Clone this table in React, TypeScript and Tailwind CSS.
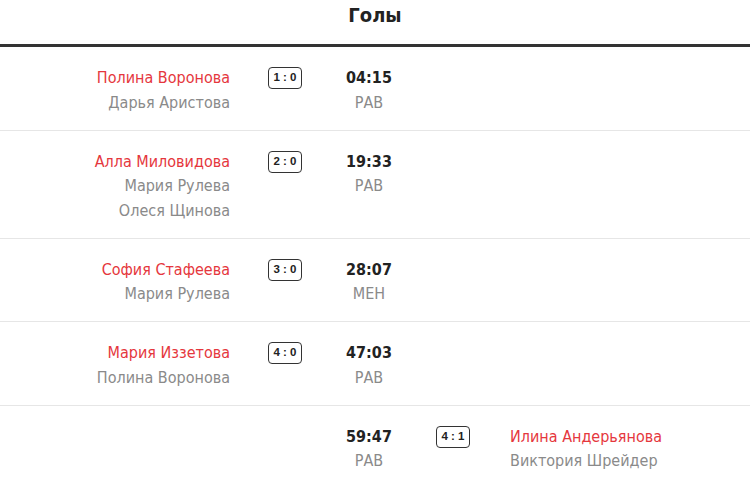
const goals = [
  { side: 'home', scorer: 'Полина Воронова', assists: ['Дарья Аристова'], score: '1 : 0', time: '04:15', kind: 'РАВ' },
  { side: 'home', scorer: 'Алла Миловидова', assists: ['Мария Рулева', 'Олеся Щинова'], score: '2 : 0', time: '19:33', kind: 'РАВ' },
  { side: 'home', scorer: 'София Стафеева', assists: ['Мария Рулева'], score: '3 : 0', time: '28:07', kind: 'МЕН' },
  { side: 'home', scorer: 'Мария Иззетова', assists: ['Полина Воронова'], score: '4 : 0', time: '47:03', kind: 'РАВ' },
  { side: 'away', scorer: 'Илина Андерьянова', assists: ['Виктория Шрейдер'], score: '4 : 1', time: '59:47', kind: 'РАВ' },
]

type Goal = (typeof goals)[number]

function ScoreBox({ score }: { score: string }) {
  return (
    <div className="flex h-[22px] w-[34px] items-center justify-center whitespace-nowrap rounded-[4px] border-[1.5px] border-[#333] text-[11.5px] leading-none font-bold text-[#222] [font-family:'Liberation_Sans',sans-serif]">
      {score}
    </div>
  )
}

function Players({ goal, align }: { goal: Goal; align: 'left' | 'right' }) {
  return (
    <div className={align === 'right' ? 'text-right' : 'text-left'}>
      <div className="text-[#e5373d]">{goal.scorer}</div>
      {goal.assists.map((a) => (
        <div key={a} className="text-[#8a8a8a]">{a}</div>
      ))}
    </div>
  )
}

function GoalRow({ goal }: { goal: Goal }) {
  const home = goal.side === 'home'
  return (
    <div className="grid grid-cols-[268px_34px_134px_34px_1fr] border-b border-[#e6e6e6] pt-[19px] pb-[14.5px] leading-[24.5px] last:border-b-0">
      <div className="pr-[38px]">{home && <Players goal={goal} align="right" />}</div>
      <div className="pt-[1px]">{home && <ScoreBox score={goal.score} />}</div>
      <div className="text-center">
        <div className="font-bold text-[#222]">{goal.time}</div>
        <div className="text-[#8a8a8a]">{goal.kind}</div>
      </div>
      <div className="pt-[1px]">{!home && <ScoreBox score={goal.score} />}</div>
      <div className="pl-[40px]">{!home && <Players goal={goal} align="left" />}</div>
    </div>
  )
}

export default function App() {
  return (
    <div className="min-h-[490px] w-[750px] bg-white text-[16px] [font-family:'DejaVu_Sans_Condensed','Liberation_Sans',sans-serif]">
      <h2 className="h-[44px] pt-[2px] text-center text-[20px] leading-[26px] font-bold text-[#222]">Голы</h2>
      <div className="border-t-[3px] border-[#333]" />
      <div>
        {goals.map((g) => (
          <GoalRow key={g.time} goal={g} />
        ))}
      </div>
    </div>
  )
}
